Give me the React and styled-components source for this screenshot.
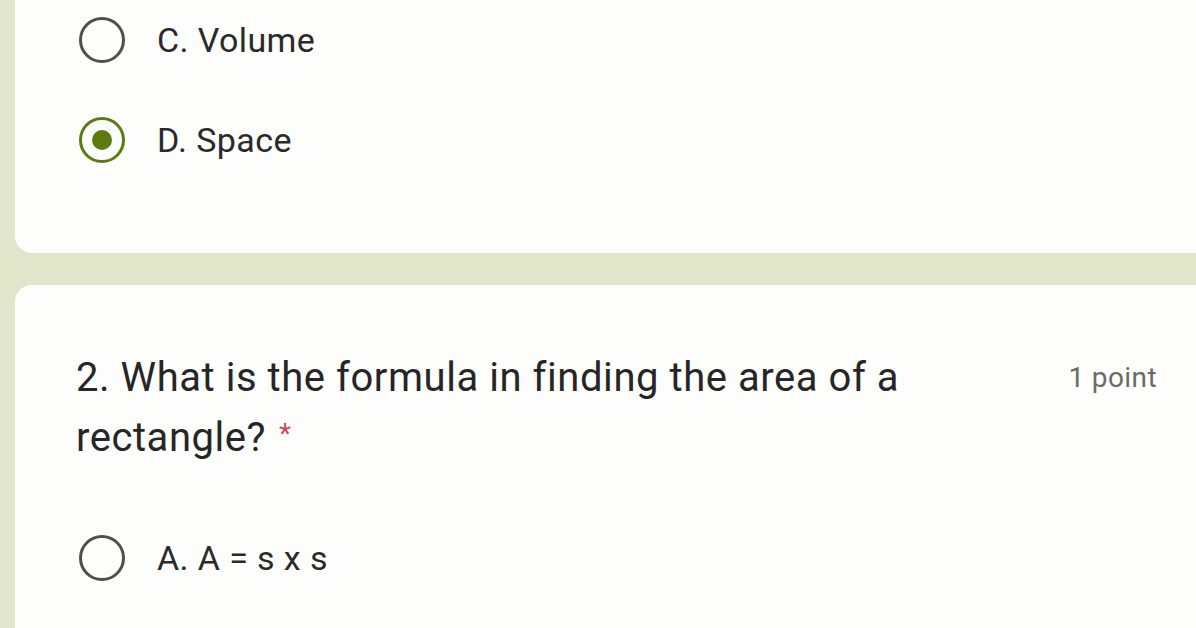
import React from "react";
import styled, { createGlobalStyle } from "styled-components";

const Global = createGlobalStyle`
  html, body { margin: 0; padding: 0; }
  body {
    background: #e1e6cb;
    font-family: Roboto, "Noto Sans", Arial, sans-serif;
    overflow: hidden;
  }
`;

const Page = styled.div`
  display: flex;
  flex-direction: column;
  gap: 32px;
  padding-left: 15px;
  height: 628px;
  overflow: hidden;
`;

const Card = styled.section`
  background: #fdfdfb;
  border-radius: ${(p) => (p.$top ? "0 0 0 17px" : "17px 0 0 0")};
  padding: ${(p) => (p.$top ? "0 39px 73px 64px" : "63px 39px 0 61px")};
  flex-shrink: 0;
  flex-grow: ${(p) => (p.$top ? 0 : 1)};
`;

const Options = styled.div`
  display: flex;
  flex-direction: column;
  gap: 20px;
  padding-left: ${(p) => (p.$inset ? "3px" : "0")};
`;

const Option = styled.label`
  display: flex;
  align-items: center;
  gap: 32px;
  height: 80px;
  font-size: 34px;
  color: #2a2a2a;
  letter-spacing: 0.4px;
`;

const Radio = styled.span`
  box-sizing: border-box;
  width: 46px;
  height: 46px;
  border-radius: 50%;
  border: 3.5px solid ${(p) => (p.$checked ? "#5b7a10" : "#4e4e4e")};
  display: flex;
  align-items: center;
  justify-content: center;
  flex-shrink: 0;
  &::after {
    content: "";
    width: 20px;
    height: 20px;
    border-radius: 50%;
    background: #5b7a10;
    display: ${(p) => (p.$checked ? "block" : "none")};
  }
`;

const Header = styled.div`
  display: flex;
  justify-content: space-between;
  align-items: flex-start;
  gap: 40px;
  margin-bottom: 50px;
`;

const Title = styled.h2`
  margin: 0;
  font-weight: 400;
  font-size: 40px;
  line-height: 60px;
  color: #262626;
  letter-spacing: 0.55px;
  max-width: 880px;
`;

const Star = styled.span`
  display: inline-block;
  color: #cc4a5e;
  font-size: 28px;
  line-height: 1;
  margin-left: 13px;
  vertical-align: 8px;
`;

const Points = styled.span`
  font-size: 28px;
  color: #6a6a6a;
  line-height: 60px;
  white-space: nowrap;
  letter-spacing: 0.4px;
`;

export default function App() {
  return (
    <>
      <Global />
      <Page>
        <Card $top>
          <Options>
            <Option>
              <Radio />
              C. Volume
            </Option>
            <Option>
              <Radio $checked />
              D. Space
            </Option>
          </Options>
        </Card>
        <Card>
          <Header>
            <Title>
              2. What is the formula in finding the area of a rectangle?
              <Star>*</Star>
            </Title>
            <Points>1 point</Points>
          </Header>
          <Options $inset>
            <Option>
              <Radio />
              A. A = s x s
            </Option>
            <Option>
              <Radio />
            </Option>
          </Options>
        </Card>
      </Page>
    </>
  );
}
